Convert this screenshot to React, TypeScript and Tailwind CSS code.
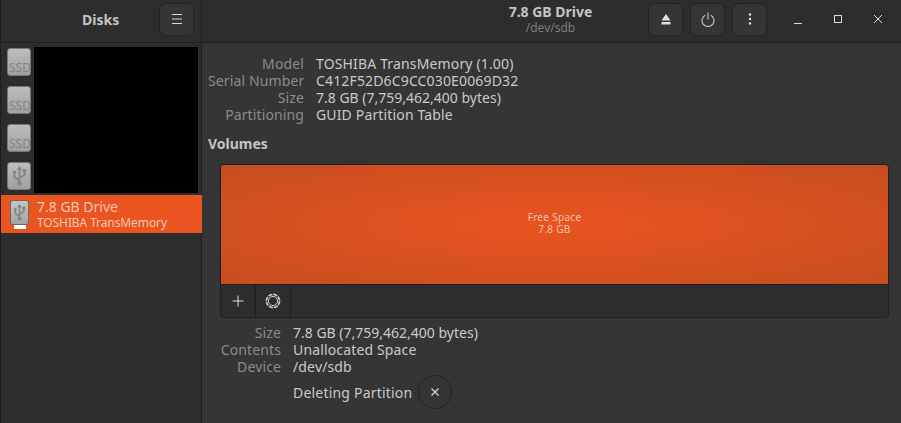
import React from "react";

const UsbGlyph = ({ className }: { className: string }) => (
  <svg viewBox="0 0 16 22" className={className} fill="none" stroke="#858585" strokeWidth="2">
    <path d="M8 2v17" />
    <path d="M8 0L5 4.5h6z" fill="#858585" stroke="none" />
    <path d="M8 15.5L2.5 12.5V8" />
    <path d="M8 13l5.5-3V6.5" />
    <circle cx="8" cy="19" r="2.6" fill="#858585" stroke="none" />
    <circle cx="2.5" cy="7" r="2" fill="#858585" stroke="none" />
    <rect x="11.5" y="3.4" width="4" height="3.6" fill="#858585" stroke="none" />
  </svg>
);

const DriveIcon = ({ kind }: { kind: "ssd" | "usb" }) => (
  <div className="flex h-[28px] w-[24px] items-end justify-center overflow-hidden rounded-[3px] border border-[#777777] bg-gradient-to-b from-[#bdbdbd] to-[#a0a0a0]">
    {kind === "ssd" ? (
      <span className="mb-[1px] whitespace-nowrap pl-[2px] text-[12px] leading-[13px] text-[#858585]">SSD</span>
    ) : (
      <UsbGlyph className="mb-[3px] h-[20px] w-[15px]" />
    )}
  </div>
);

const HeaderButton = ({ children }: { children: React.ReactNode }) => (
  <button className="flex h-[33px] w-[35px] items-center justify-center rounded-[6px] border border-[#232323] bg-[#353535] text-[#dadada]">
    {children}
  </button>
);

interface InfoRowProps {
  label: string;
  value: string;
  w: string;
  tight?: boolean;
}

const InfoRow = ({ label, value, w, tight }: InfoRowProps) => (
  <div className="flex h-[17px] items-center leading-[17px]">
    <span className={`${w} whitespace-nowrap text-right tracking-[0.12px] text-[#8b8b8b]`}>{label}</span>
    <span className={`ml-[12px] whitespace-nowrap text-[#c9c9c9] ${tight ? "" : "tracking-[0.15px]"}`}>{value}</span>
  </div>
);

export default function App() {
  return (
    <div className="flex h-[423px] w-[901px] flex-col overflow-hidden border-l border-[#1e1e1e] bg-[#353535] font-['Noto_Sans',sans-serif] text-[14px]">
      <header className="flex h-[43px] shrink-0 border-b border-[#1f1f1f] bg-[#2d2d2d] pb-[4px]">
        <div className="-mb-[4px] flex w-[201px] items-center border-r border-[#1f1f1f] pb-[4px] pl-[81px]">
          <span className="font-bold text-[#c4c4c4]">Disks</span>
          <div className="ml-[40px]">
            <HeaderButton>
              <svg width="12" height="10" viewBox="0 0 12 10" stroke="#dadada" strokeWidth="1">
                <path d="M1 .5h10M1 5h10M1 9.5h10" />
              </svg>
            </HeaderButton>
          </div>
        </div>
        <div className="flex flex-1 items-center">
          <div className="ml-[306px] flex w-[85px] flex-col items-center">
            <span className="whitespace-nowrap font-bold leading-[16px] text-[#c4c4c4]">7.8 GB Drive</span>
            <span className="text-[12px] leading-[15px] text-[#7f7f7f]">/dev/sdb</span>
          </div>
          <div className="ml-[55px] flex gap-[7px]">
            <HeaderButton>
              <svg width="12" height="12" viewBox="0 0 12 12" fill="#e0e0e0">
                <path d="M6 1l4.5 6.5h-9zM1.5 9h9v2.5h-9z" />
              </svg>
            </HeaderButton>
            <HeaderButton>
              <svg width="14" height="15" viewBox="0 0 14 15" fill="none" stroke="#c8c8c8" strokeWidth="1.1">
                <path d="M7 .5v7M4.2 3.2a6 6 0 1 0 5.6 0" />
              </svg>
            </HeaderButton>
            <HeaderButton>
              <svg width="4" height="12" viewBox="0 0 4 12" fill="#e0e0e0">
                <circle cx="2" cy="1.5" r="1.2" />
                <circle cx="2" cy="6" r="1.2" />
                <circle cx="2" cy="10.5" r="1.2" />
              </svg>
            </HeaderButton>
          </div>
          <div className="ml-[26px] flex items-center gap-[30px]">
            <svg width="10" height="10" viewBox="0 0 10 10" stroke="#dcdcdc" strokeWidth="1">
              <path d="M1 9.5h8" />
            </svg>
            <svg width="10" height="10" viewBox="0 0 10 10" fill="none" stroke="#dcdcdc" strokeWidth="1">
              <rect x="1.5" y="1.5" width="7" height="7" />
            </svg>
            <svg width="10" height="10" viewBox="0 0 10 10" stroke="#dcdcdc" strokeWidth="1">
              <path d="M1 1l8 8M9 1l-8 8" />
            </svg>
          </div>
        </div>
      </header>
      <div className="flex flex-1">
        <aside className="flex w-[201px] shrink-0 flex-col border-r border-[#1f1f1f] bg-[#2d2d2d]">
          <div className="flex h-[152px]">
            <div className="flex w-[33px] flex-col gap-[10px] pl-[6px] pt-[5px]">
              <DriveIcon kind="ssd" />
              <DriveIcon kind="ssd" />
              <DriveIcon kind="ssd" />
              <DriveIcon kind="usb" />
            </div>
            <div className="mt-[4px] h-[146px] w-[164px] bg-black" />
          </div>
          <div className="-mr-[1px] flex h-[38px] items-center bg-[#e95420] pl-[9px]">
            <div className="flex flex-col items-center">
              <div className="flex h-[25px] w-[19px] items-center justify-center rounded-[3px] border border-[#6a6a6a] bg-gradient-to-b from-[#c6c6c6] to-[#a4a4a4]">
                <UsbGlyph className="h-[17px] w-[13px]" />
              </div>
              <div className="h-[4px] w-[12px] bg-white" />
            </div>
            <div className="ml-[8px] flex flex-col">
              <span className="leading-[16px] text-[#f8c6b2]">7.8 GB Drive</span>
              <span className="whitespace-nowrap text-[12px] leading-[15px] tracking-[-0.1px] text-[#f8c6b2]">TOSHIBA TransMemory</span>
            </div>
          </div>
        </aside>
        <main className="flex-1">
          <div className="pl-[6px] pt-[12px]">
            <InfoRow w="w-[96px]" label="Model" value="TOSHIBA TransMemory (1.00)" />
            <InfoRow w="w-[96px]" label="Serial Number" value="C412F52D6C9CC030E0069D32" />
            <InfoRow w="w-[96px]" label="Size" value="7.8 GB (7,759,462,400 bytes)" tight />
            <InfoRow w="w-[96px]" label="Partitioning" value="GUID Partition Table" />
            <h2 className="mt-[12px] font-bold leading-[17px] text-[#c4c4c4]">Volumes</h2>
          </div>
          <div className="ml-[18px] mt-[12px] w-[669px] overflow-hidden rounded-[4px] border border-[#1f1f1f] bg-[#2d2d2d]">
            <div className="flex h-[120px] flex-col items-center justify-center border-b border-[#1f1f1f] bg-[radial-gradient(ellipse_at_center,#e95420_0%,#c74e20_100%)] pb-[4px] text-[10px] leading-[12px] tracking-[0.3px] text-[#f4c2ac]">
              <span>Free Space</span>
              <span>7.8 GB</span>
            </div>
            <div className="flex h-[32px]">
              <div className="flex w-[35px] items-center justify-center border-r border-[#1f1f1f]">
                <svg width="12" height="12" viewBox="0 0 12 12" stroke="#dcdcdc" strokeWidth="1">
                  <path d="M6 .5v11M.5 6h11" />
                </svg>
              </div>
              <div className="flex w-[35px] items-center justify-center border-r border-[#1f1f1f]">
                <svg width="16" height="16" viewBox="0 0 16 16" fill="none" stroke="#cfcfcf">
                  <circle cx="8" cy="8" r="6.6" strokeWidth="1.6" strokeDasharray="4.2 1" />
                  <circle cx="8" cy="8" r="4.6" strokeWidth="1" />
                </svg>
              </div>
            </div>
          </div>
          <div className="ml-[18px] mt-[6px]">
            <InfoRow w="w-[61px]" label="Size" value="7.8 GB (7,759,462,400 bytes)" tight />
            <InfoRow w="w-[61px]" label="Contents" value="Unallocated Space" />
            <InfoRow w="w-[61px]" label="Device" value="/dev/sdb" />
            <div className="ml-[73px] flex items-center">
              <span className="tracking-[0.2px] text-[#c9c9c9]">Deleting Partition</span>
              <div className="ml-[6px] flex h-[34px] w-[34px] items-center justify-center rounded-full border border-[#232323]">
                <svg width="8" height="8" viewBox="0 0 8 8" stroke="#d4d4d4" strokeWidth="1.2">
                  <path d="M.5.5l7 7M7.5.5l-7 7" />
                </svg>
              </div>
            </div>
          </div>
        </main>
      </div>
    </div>
  );
}
